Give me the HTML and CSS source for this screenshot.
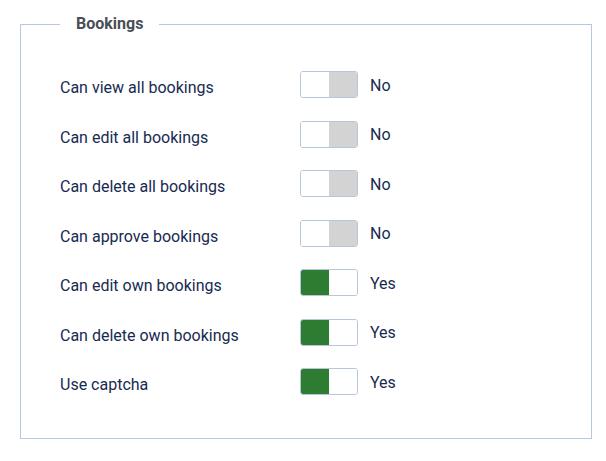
FILE: index.html
```html
<!DOCTYPE html>
<html>
<head>
<meta charset="utf-8">
<link rel="stylesheet" href="styles.css">
</head>
<body>
<fieldset class="group">
  <legend class="group-title">Bookings</legend>
  <div class="row"><span class="label">Can view all bookings</span><span class="toggle off"><span class="knob"></span><span class="fill"></span></span><span class="state">No</span></div>
  <div class="row"><span class="label">Can edit all bookings</span><span class="toggle off"><span class="knob"></span><span class="fill"></span></span><span class="state">No</span></div>
  <div class="row"><span class="label">Can delete all bookings</span><span class="toggle off"><span class="knob"></span><span class="fill"></span></span><span class="state">No</span></div>
  <div class="row"><span class="label">Can approve bookings</span><span class="toggle off"><span class="knob"></span><span class="fill"></span></span><span class="state">No</span></div>
  <div class="row"><span class="label">Can edit own bookings</span><span class="toggle on"><span class="fill"></span><span class="knob"></span></span><span class="state">Yes</span></div>
  <div class="row"><span class="label">Can delete own bookings</span><span class="toggle on"><span class="fill"></span><span class="knob"></span></span><span class="state">Yes</span></div>
  <div class="row"><span class="label">Use captcha</span><span class="toggle on"><span class="fill"></span><span class="knob"></span></span><span class="state">Yes</span></div>
</fieldset>
</body>
</html>
```
FILE: styles.css
```css
html, body {
  margin: 0;
  padding: 0;
  background: #fff;
}
body {
  padding: 14px 14px 0 20px;
  font-family: Roboto, "Liberation Sans", sans-serif;
  color: #172a52;
}
.group {
  margin: 0;
  width: 572px;
  box-sizing: border-box;
  border: 1px solid #b5c7e2;
  padding: 37px 0 43px 39px;
  min-width: 0;
}
.group-title {
  padding: 0 16px;
  font-size: 16px;
  line-height: 20px;
  font-weight: 700;
  color: #4a4e55;
}
.row {
  display: flex;
  align-items: center;
  height: 27px;
  margin-bottom: 22.5px;
  font-size: 16px;
}
.row:last-child {
  margin-bottom: 0;
}
.label {
  width: 240px;
  padding-top: 6px;
}
.toggle {
  display: flex;
  width: 58px;
  height: 27px;
  box-sizing: border-box;
  border: 1px solid #b8c6da;
  border-radius: 3px;
  overflow: hidden;
}
.toggle .knob,
.toggle .fill {
  flex: 1;
}
.toggle .knob {
  background: #fff;
}
.toggle.off .fill {
  background: #d3d3d3;
}
.toggle.on .fill {
  background: #2e7b32;
}
.state {
  margin-left: 12px;
  margin-top: 1px;
}
```
